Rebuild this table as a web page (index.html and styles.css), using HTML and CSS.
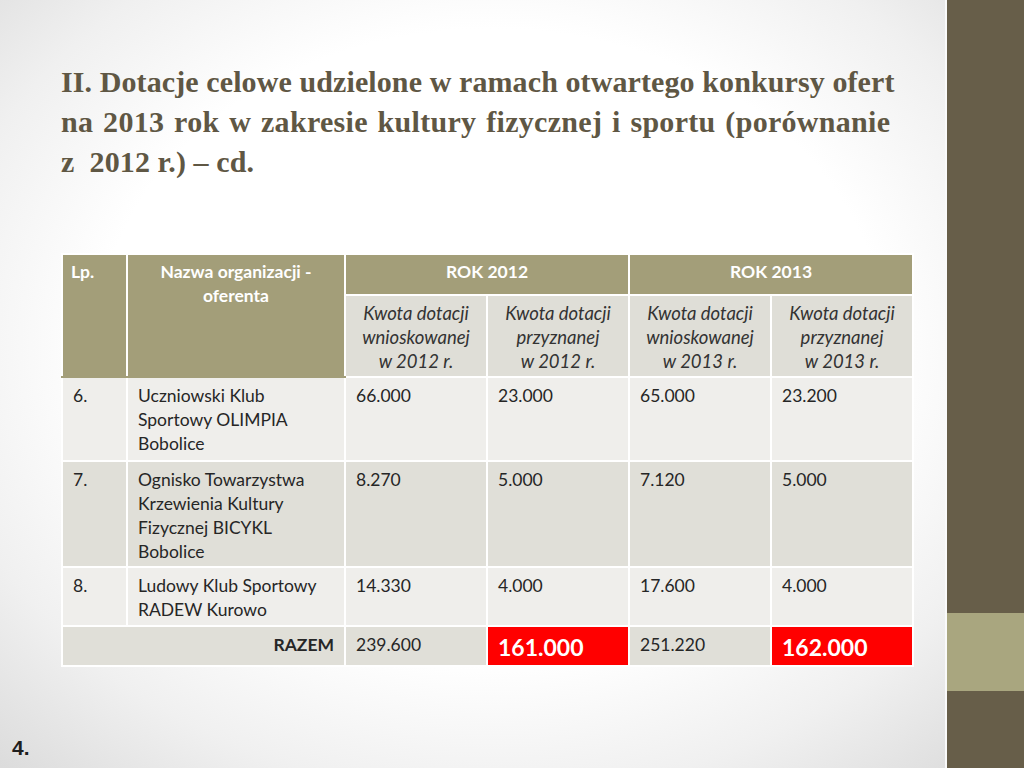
FILE: index.html
```html
<!DOCTYPE html>
<html lang="pl">
<head>
<meta charset="utf-8">
<link rel="stylesheet" href="styles.css">
</head>
<body>
<div class="slide">
  <main class="main">
    <h1 class="title">II. Dotacje celowe udzielone w ramach otwartego konkursy ofert<br><span class="l2">na 2013 rok w zakresie kultury fizycznej i sportu (porównanie</span><br>z&nbsp; 2012 r.) – cd.</h1>
    <table class="grid">
      <colgroup>
        <col class="c-lp"><col class="c-name"><col class="c-num"><col class="c-num"><col class="c-num"><col class="c-num">
      </colgroup>
      <thead>
        <tr class="h1">
          <th rowspan="2" class="th-lp">Lp.</th>
          <th rowspan="2" class="th-name">Nazwa organizacji -<br>oferenta</th>
          <th colspan="2" class="th-year">ROK 2012</th>
          <th colspan="2" class="th-year">ROK 2013</th>
        </tr>
        <tr class="h2">
          <th class="th-sub">Kwota dotacji<br>wnioskowanej<br>w 2012 r.</th>
          <th class="th-sub">Kwota dotacji<br>przyznanej<br>w 2012 r.</th>
          <th class="th-sub">Kwota dotacji<br>wnioskowanej<br>w 2013 r.</th>
          <th class="th-sub">Kwota dotacji<br>przyznanej<br>w 2013 r.</th>
        </tr>
      </thead>
      <tbody>
        <tr class="r-light r6">
          <td>6.</td>
          <td>Uczniowski Klub<br>Sportowy OLIMPIA<br>Bobolice</td>
          <td>66.000</td><td>23.000</td><td>65.000</td><td>23.200</td>
        </tr>
        <tr class="r-dark r7">
          <td>7.</td>
          <td>Ognisko Towarzystwa<br>Krzewienia Kultury<br>Fizycznej BICYKL<br>Bobolice</td>
          <td>8.270</td><td>5.000</td><td>7.120</td><td>5.000</td>
        </tr>
        <tr class="r-light r8">
          <td>8.</td>
          <td>Ludowy Klub Sportowy<br>RADEW Kurowo</td>
          <td>14.330</td><td>4.000</td><td>17.600</td><td>4.000</td>
        </tr>
        <tr class="r-dark total">
          <td colspan="2" class="razem">RAZEM</td>
          <td>239.600</td>
          <td class="hl">161.000</td>
          <td>251.220</td>
          <td class="hl">162.000</td>
        </tr>
      </tbody>
    </table>
    <div class="pagenum">4.</div>
  </main>
  <aside class="side">
    <div class="side-dark"></div>
    <div class="side-band"></div>
    <div class="side-dark2"></div>
  </aside>
</div>
</body>
</html>
```

FILE: styles.css
```css
html, body {
  margin: 0;
  padding: 0;
  width: 1024px;
  height: 768px;
  overflow: hidden;
}

.slide {
  display: flex;
  width: 1024px;
  height: 768px;
  background: radial-gradient(ellipse 70% 75% at 48% 45%, #ffffff 55%, #f0f0f0 78%, #dcdcdc 100%);
}

.main {
  flex: 1;
  display: flex;
  flex-direction: column;
  padding: 62px 0 0 61px;
  box-sizing: border-box;
}

.title {
  margin: 0;
  font-family: "Liberation Serif", "DejaVu Serif", serif;
  font-weight: bold;
  font-size: 30px;
  line-height: 40px;
  color: #5f5744;
  letter-spacing: 0.1px;
}

.title .l2 {
  word-spacing: 2px;
  letter-spacing: 0.3px;
}

.grid {
  margin-top: 71px;
  border-collapse: collapse;
  table-layout: fixed;
  width: 852px;
  font-family: "Lato", "Open Sans", sans-serif;
  font-size: 17.5px;
  line-height: 24px;
  color: #262626;
}

.c-lp { width: 65px; }
.c-name { width: 218px; }
.c-num { width: 142px; }

.grid th, .grid td {
  border: 2px solid #ffffff;
  vertical-align: top;
  padding: 0 10px;
  text-align: left;
}

.h1 th {
  background: #a39e79;
  color: #ffffff;
  font-weight: bold;
  font-size: 17.5px;
  height: 41px;
  padding-top: 5px;
  box-sizing: border-box;
}

.th-lp { padding-left: 8px !important; }
.th-name, .th-year { text-align: center !important; }

.h1 .th-name, .h1 .th-lp {
  border-bottom-color: #a39e79;
}

.th-sub {
  background: #dfded7;
  color: #333333;
  font-weight: normal;
  font-style: italic;
  font-size: 18.5px;
  text-align: center !important;
  height: 82px;
  padding: 5px 2px 0 !important;
  box-sizing: border-box;
}

.r-light td { background: #efeeeb; }
.r-dark td { background: #e0dfd8; }

.grid tbody td { padding-top: 6px; }

.r6 td { height: 84px; box-sizing: border-box; }
.r7 td { height: 106px; box-sizing: border-box; }
.r8 td { height: 59px; box-sizing: border-box; }
.total td { height: 40px; box-sizing: border-box; }

.razem {
  text-align: right !important;
  font-weight: bold;
}

.total td.hl {
  background: #ff0000;
  color: #ffffff;
  font-weight: bold;
  font-size: 23px;
  padding-top: 8px;
}

.pagenum {
  margin-top: auto;
  margin-left: -49px;
  margin-bottom: 8px;
  font-family: "Liberation Sans", "Open Sans", sans-serif;
  font-weight: bold;
  font-size: 21px;
  color: #1e1e1e;
}

.side {
  width: 77px;
  display: flex;
  flex-direction: column;
  border-left: 2px solid #fafafa;
}

.side-dark { height: 613px; background: #675e49; }
.side-band { height: 78px; background: #a9a67f; }
.side-dark2 { flex: 1; background: #675e49; }
```
